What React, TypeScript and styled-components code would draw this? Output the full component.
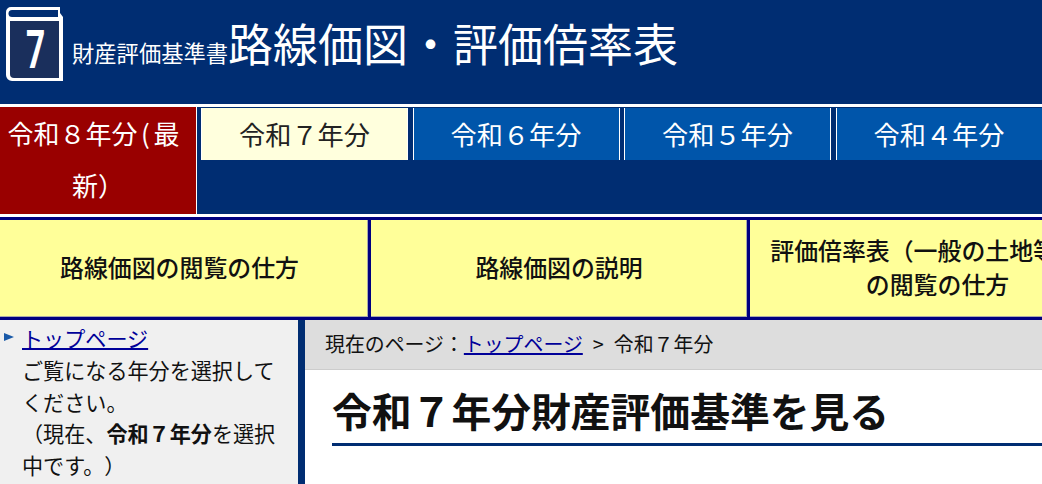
import React from 'react';
import styled, { createGlobalStyle } from 'styled-components';

const GlobalStyle = createGlobalStyle`
  html, body {
    margin: 0;
    padding: 0;
    overflow: hidden;
    background: #fff;
  }
  body {
    font-family: "Noto Sans CJK JP", "Noto Sans", sans-serif;
    color: #111;
    text-spacing-trim: space-all;
  }
`;

const Page = styled.div`
  width: 1042px;
  height: 484px;
  overflow: hidden;
`;

const Header = styled.header`
  display: flex;
  align-items: flex-start;
  height: 104px;
  padding: 7px 0 0 6px;
  box-sizing: border-box;
  background: #002d72;
  color: #fff;
`;

const Logo = styled.svg`
  width: 57px;
  height: 74px;
  flex: none;
`;

const LogoDigit = styled.text`
  fill: #fff;
  font-family: Roboto, "Liberation Sans", sans-serif;
  font-size: 54px;
  font-weight: 700;
  text-anchor: middle;
`;

const TitleWrap = styled.div`
  display: flex;
  align-items: baseline;
  margin: 4px 0 0 9px;
  white-space: nowrap;
`;

const SubTitle = styled.span`
  font-size: 22.3px;
  line-height: 64px;
`;

const MainTitle = styled.h1`
  margin: 0;
  font-size: 45px;
  font-weight: 400;
  line-height: 64px;
`;

const TabBar = styled.nav`
  display: flex;
  margin-top: 3px;
  height: 107px;
  background: #002d72;
  border-bottom: 3px solid #fff;
`;

const CurrentYear = styled.a`
  flex: none;
  width: 196px;
  height: 107px;
  background: #990000;
  border-right: 1px solid #fff;
  color: #fff;
  font-size: 26px;
  line-height: 52px;
  text-align: center;
`;

const Paren = styled.span`
  display: inline-block;
  width: 16px;
  text-align: center;
`;

const LineEnd = styled.span`
  padding-right: 9px;
`;

const Tabs = styled.div`
  display: flex;
  align-items: flex-start;
  gap: 5px;
  padding: 1px 0 0 4px;
`;

const Tab = styled.a<{ $active?: boolean }>`
  flex: none;
  width: 205px;
  height: 52px;
  background: ${(p) => (p.$active ? '#ffffdd' : '#0055aa')};
  border-left: 1px solid #fff;
  border-right: 1px solid #fff;
  margin-right: -0.5px;
  color: ${(p) => (p.$active ? '#222' : '#fff')};
  font-size: 26.2px;
  line-height: 52px;
  text-align: center;
`;

const MenuBar = styled.nav`
  display: flex;
  width: 1300px;
  height: 103px;
  box-sizing: border-box;
  background: #ffff99;
  border-top: 3px solid #000080;
  border-bottom: 3px solid #000080;
`;

const MenuItem = styled.a<{ $width: number; $shift?: number }>`
  display: flex;
  align-items: center;
  justify-content: center;
  flex: none;
  width: ${(p) => p.$width}px;
  box-sizing: border-box;
  padding: 0 ${(p) => p.$shift ?? 0}px 4px 0;
  border-right: 3px solid #000080;
  box-shadow: inset -1px -1px 0 #aaa;
  color: #111;
  font-size: 23.9px;
  font-weight: 500;
  line-height: 34px;
  text-align: center;
`;

const Body = styled.div`
  display: flex;
  height: 164px;
`;

const Sidebar = styled.aside`
  position: relative;
  flex: none;
  width: 305px;
  box-sizing: border-box;
  padding: 3px 20px 0 22px;
  background: #f0f0f0;
  border-right: 7px solid #002d72;
  font-size: 21.1px;
  line-height: 31.75px;
`;

const Marker = styled.span`
  position: absolute;
  left: 4px;
  top: 13px;
  width: 0;
  height: 0;
  border-left: 10px solid #1a5aa8;
  border-top: 4px solid transparent;
  border-bottom: 4px solid transparent;
`;

const SideLink = styled.a`
  display: block;
  color: #000099;
  text-decoration: underline;
  text-decoration-thickness: 2px;
`;

const Main = styled.main`
  flex: 1;
  min-width: 0;
`;

const Breadcrumb = styled.div`
  height: 50px;
  box-sizing: border-box;
  padding-left: 20px;
  background: #dddddd;
  border-bottom: 1px solid #ccc;
  font-size: 19.9px;
  line-height: 48px;
  white-space: nowrap;
`;

const CrumbLink = styled.a`
  color: #000099;
  text-decoration: underline;
  text-decoration-thickness: 2px;
`;

const Sep = styled.span`
  margin: 0 10px;
`;

const Heading = styled.h2`
  margin: 13px 0 0 27px;
  height: 60px;
  border-bottom: 3px solid #002d72;
  font-size: 39.8px;
  font-weight: 700;
  line-height: 54px;
  white-space: nowrap;
`;

const App: React.FC = () => {
  return (
    <Page>
      <GlobalStyle />
      <Header>
        <Logo viewBox="0 0 57 74">
          <path d="M5 0H54V6L57 10V74H6a6 6 0 0 1-6-6V5a5 5 0 0 1 5-5Z" fill="#fff" />
          <path d="M6 3H52V10H6a3.5 3.5 0 0 1 0-7Z" fill="#002d72" />
          <path d="M4 14H53V71H8a4 4 0 0 1-4-4Z" fill="#1a2f5c" />
          <LogoDigit transform="translate(29.5 61) scale(0.62 1)">7</LogoDigit>
        </Logo>
        <TitleWrap>
          <SubTitle>財産評価基準書</SubTitle>
          <MainTitle>路線価図・評価倍率表</MainTitle>
        </TitleWrap>
      </Header>
      <TabBar>
        <CurrentYear>令和８年分<Paren>(</Paren><LineEnd>最</LineEnd>新）</CurrentYear>
        <Tabs>
          <Tab $active>令和７年分</Tab>
          <Tab>令和６年分</Tab>
          <Tab>令和５年分</Tab>
          <Tab>令和４年分</Tab>
        </Tabs>
      </TabBar>
      <MenuBar>
        <MenuItem $width={371} $shift={9}>路線価図の閲覧の仕方</MenuItem>
        <MenuItem $width={379}>路線価図の説明</MenuItem>
        <MenuItem $width={378}>評価倍率表（一般の土地等用）<br />の閲覧の仕方</MenuItem>
      </MenuBar>
      <Body>
        <Sidebar>
          <Marker />
          <SideLink>トップページ</SideLink>
          ご覧になる年分を選択してください。<br />
          （現在、<b>令和７年分</b>を選択中です。）
        </Sidebar>
        <Main>
          <Breadcrumb>
            現在のページ：<CrumbLink>トップページ</CrumbLink><Sep>&gt;</Sep>令和７年分
          </Breadcrumb>
          <Heading>令和７年分財産評価基準を見る</Heading>
        </Main>
      </Body>
    </Page>
  );
};

export default App;
